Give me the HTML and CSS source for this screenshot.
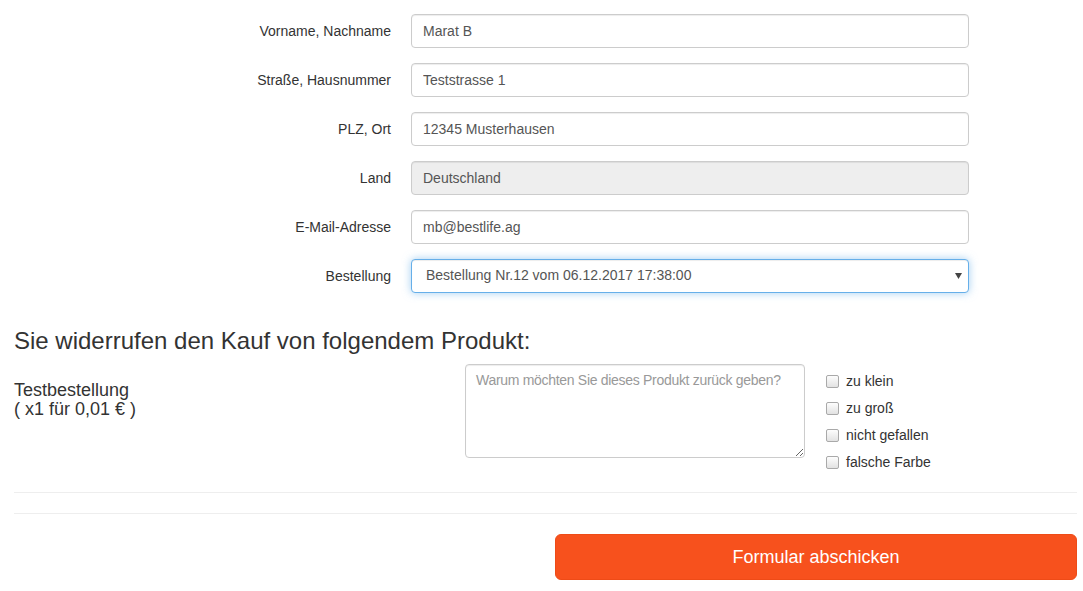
FILE: index.html
```html
<!DOCTYPE html>
<html lang="de">
<head>
<meta charset="utf-8">
<title>Widerruf</title>
<link rel="stylesheet" href="styles.css">
</head>
<body>
<div class="page">
  <form class="form">
    <div class="row">
      <label class="lbl" for="name">Vorname, Nachname</label>
      <input class="ctl" id="name" type="text" value="Marat B">
    </div>
    <div class="row">
      <label class="lbl" for="str">Straße, Hausnummer</label>
      <input class="ctl" id="str" type="text" value="Teststrasse 1">
    </div>
    <div class="row">
      <label class="lbl" for="plz">PLZ, Ort</label>
      <input class="ctl" id="plz" type="text" value="12345 Musterhausen">
    </div>
    <div class="row">
      <label class="lbl" for="land">Land</label>
      <input class="ctl" id="land" type="text" value="Deutschland" disabled>
    </div>
    <div class="row">
      <label class="lbl" for="mail">E-Mail-Adresse</label>
      <input class="ctl" id="mail" type="text" value="mb@bestlife.ag">
    </div>
    <div class="row">
      <label class="lbl" for="best">Bestellung</label>
      <div class="selwrap">
        <select class="ctl sel" id="best">
          <option>Bestellung Nr.12 vom 06.12.2017 17:38:00</option>
        </select>
        <svg class="arrow" width="7" height="6" viewBox="0 0 7 6"><path d="M0 0H7L3.5 6Z" fill="#444"/></svg>
      </div>
    </div>
  </form>

  <h3 class="title">Sie widerrufen den Kauf von folgendem Produkt:</h3>

  <div class="product">
    <h4 class="pname">Testbestellung<br>( x1 für 0,01 € )</h4>
    <textarea class="reason" placeholder="Warum möchten Sie dieses Produkt zurück geben?"></textarea>
    <div class="checks">
      <label class="chk"><input type="checkbox" class="box"><span>zu klein</span></label>
      <label class="chk"><input type="checkbox" class="box"><span>zu groß</span></label>
      <label class="chk"><input type="checkbox" class="box"><span>nicht gefallen</span></label>
      <label class="chk"><input type="checkbox" class="box"><span>falsche Farbe</span></label>
    </div>
  </div>

  <hr class="sep">
  <hr class="sep">

  <div class="actions">
    <button class="submit" type="button">Formular abschicken</button>
  </div>
</div>
</body>
</html>
```
FILE: styles.css
```css
* { box-sizing: border-box; }
html, body { margin: 0; padding: 0; background: #fff; }
body {
  font-family: "Liberation Sans", Arial, Helvetica, sans-serif;
  font-size: 14px;
  line-height: 1.42857;
  color: #333;
}
.page { padding: 14px 6px 0 14px; }

.form { display: flex; flex-direction: column; gap: 15px; padding-bottom: 15px; }
.row {
  display: grid;
  grid-template-columns: 377px 558px;
  column-gap: 20px;
  align-items: start;
}
.lbl { text-align: right; color: #333; padding-top: 7px; line-height: 20px; }
.ctl {
  display: block;
  width: 100%;
  height: 34px;
  padding: 6px 11px;
  font-family: inherit;
  font-size: 14px;
  line-height: 1.42857;
  color: #555;
  background: #fff;
  border: 1px solid #ccc;
  border-radius: 4px;
  box-shadow: inset 0 1px 1px rgba(0,0,0,.075);
  outline: none;
}
.ctl:disabled { background: #eee; color: #555; opacity: 1; }
.selwrap { position: relative; }
.sel {
  -webkit-appearance: none;
  appearance: none;
  padding-left: 14px;
  border-color: #66afe9;
  box-shadow: inset 0 1px 1px rgba(0,0,0,.075), 0 0 8px rgba(102,175,233,.6);
}
.arrow { position: absolute; right: 7px; top: 14px; pointer-events: none; }

.title {
  margin: 20px 0 10px;
  font-size: 24px;
  font-weight: 500;
  line-height: 1.1;
  color: #333;
}

.product {
  display: grid;
  grid-template-columns: 451px 340px auto;
  align-items: start;
}
.pname {
  margin: 17px 0 0;
  font-size: 18px;
  font-weight: 500;
  line-height: 19px;
}
.reason {
  display: block;
  width: 340px;
  height: 94px;
  padding: 6px 10px;
  font-family: inherit;
  font-size: 14px;
  letter-spacing: -0.3px;
  line-height: 1.42857;
  color: #555;
  border: 1px solid #ccc;
  border-radius: 4px;
  box-shadow: inset 0 1px 1px rgba(0,0,0,.075);
  resize: vertical;
  outline: none;
}
.reason::placeholder { color: #999; }
.checks {
  display: flex;
  flex-direction: column;
  gap: 7px;
  padding-top: 7px;
  margin-left: 21px;
}
.chk { display: flex; align-items: center; gap: 7px; line-height: 20px; }
.box {
  -webkit-appearance: none;
  appearance: none;
  margin: 0;
  width: 13px;
  height: 13px;
  border: 1px solid #a9a9a9;
  border-radius: 2px;
  background: linear-gradient(#fdfdfd, #e2e2e2);
}

.sep {
  margin: 20px 0;
  border: 0;
  border-top: 1px solid #eee;
}

.actions { display: flex; justify-content: flex-end; }
.submit {
  width: 522px;
  height: 46px;
  padding: 10px 16px 9px;
  font-family: inherit;
  font-size: 18px;
  line-height: 1.3333;
  color: #fff;
  background: #f7511d;
  border: 1px solid #ee4b17;
  border-radius: 6px;
}
```
